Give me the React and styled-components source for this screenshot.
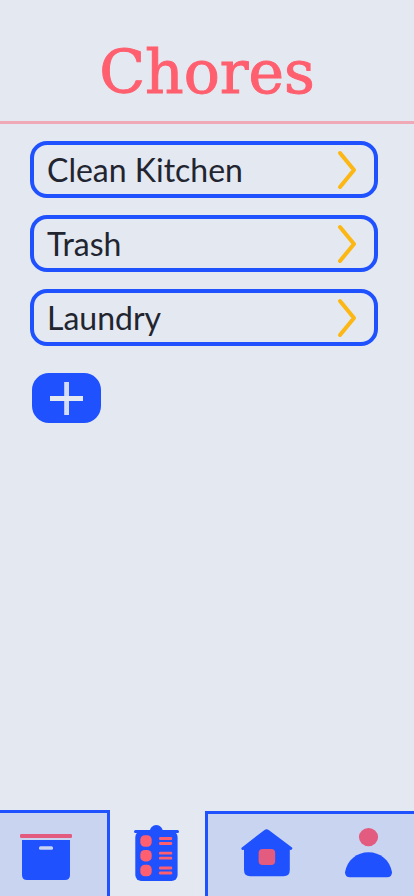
import React from "react";
import styled, { createGlobalStyle } from "styled-components";

const blue = "#1f51ff";
const coral = "#ff5f6e";
const rose = "#e35b7f";
const paper = "#e3e8f1";
const tint = "#c9d4f1";

const GlobalStyle = createGlobalStyle`
  *, *::before, *::after { box-sizing: border-box; }
  body { margin: 0; background: ${paper}; }
`;

const Page = styled.div`
  min-height: 100vh;
  display: flex;
  flex-direction: column;
  background: ${paper};
  color: #22252f;
  font-family: Lato, "Noto Sans", sans-serif;
`;

const Header = styled.header`
  display: flex;
  justify-content: center;
  padding: 32px 16px 9px;
  border-bottom: 3px solid #efa9b7;
`;

const Title = styled.h1`
  margin: 0;
  font: 400 60px/80px "DejaVu Serif", serif;
  color: ${coral};
  -webkit-text-stroke: 1px ${coral};
`;

const Main = styled.main`
  flex: 1;
  padding: 17px 36px 24px 30px;
`;

const ChoreList = styled.ul`
  list-style: none;
  margin: 0;
  padding: 0;
  display: flex;
  flex-direction: column;
  gap: 17px;
`;

const ChoreButton = styled.button`
  width: 100%;
  display: flex;
  align-items: center;
  justify-content: space-between;
  padding: 5px 17px 4px 13px;
  border: 4px solid ${blue};
  border-radius: 17px;
  background: transparent;
  color: inherit;
  font: 400 32px/40px Lato, "Noto Sans", sans-serif;
  text-align: left;
  cursor: pointer;
`;

const AddButton = styled.button`
  display: grid;
  place-items: center;
  width: 69px;
  height: 50px;
  margin: 27px 0 0 2px;
  padding: 0;
  border: 0;
  border-radius: 17px;
  background: ${blue};
  cursor: pointer;
`;

const TabBar = styled.nav`
  display: grid;
  grid-template-columns: 110fr 95fr 209fr;
  align-items: end;
`;

const TabGroup = styled.div`
  display: flex;
  align-items: flex-start;
  justify-content: ${(p) => p.$justify || "space-between"};
  height: ${(p) => (p.$side === "right" ? 85 : 86)}px;
  padding: ${(p) => p.$pad};
  background: ${(p) => (p.$side ? tint : "transparent")};
  border: 0 solid ${blue};
  border-top-width: ${(p) => (p.$side ? 3 : 0)}px;
  border-right-width: ${(p) => (p.$side === "left" ? 3 : 0)}px;
  border-left-width: ${(p) => (p.$side === "right" ? 3 : 0)}px;
`;

const Tab = styled.button`
  display: block;
  padding: 0;
  border: 0;
  background: transparent;
  cursor: pointer;
  svg { display: block; }
`;

const Chevron = () => (
  <svg width="20" height="40" viewBox="0 0 20 40" fill="none" aria-hidden="true">
    <path d="M3 3 L17 20 L3 37" stroke="#fcb712" strokeWidth="4" strokeLinecap="round" strokeLinejoin="round" />
  </svg>
);

const Plus = () => (
  <svg width="33" height="33" viewBox="0 0 33 33" aria-hidden="true">
    <rect x="14.2" y="0" width="4.8" height="33" fill="#d3dcf4" />
    <rect x="0" y="14" width="33" height="5" fill={paper} />
  </svg>
);

const BoxIcon = () => (
  <svg width="52" height="46" viewBox="0 0 52 46" aria-hidden="true">
    <rect width="52" height="4" rx="1.3" fill={rose} />
    <path d="M2 6H50V41Q50 46 45 46H7Q2 46 2 41Z" fill={blue} />
    <rect x="19" y="12.3" width="14" height="3.4" rx="1.5" fill={tint} />
  </svg>
);

const ClipboardIcon = () => (
  <svg width="45" height="56" viewBox="0 0 45 56" aria-hidden="true">
    <rect x="1.3" y="6" width="42.3" height="50" rx="6" fill={blue} />
    <rect x="0" y="5" width="45" height="3" rx="1.5" fill={blue} />
    <circle cx="22.3" cy="6.6" r="6.6" fill={blue} />
    {[10.3, 25, 39.8].map((y) => (
      <g key={y} fill={coral}>
        <rect x="6.3" y={y} width="11.4" height="11.4" rx="4.5" />
        <rect x="25" y={y + 1.8} width="13.2" height="2.8" rx="1.2" />
        <rect x="25" y={y + 6.8} width="13.2" height="2.8" rx="1.2" />
      </g>
    ))}
  </svg>
);

const HouseIcon = () => (
  <svg width="52" height="49" viewBox="0 -1 52 49" aria-hidden="true">
    <path
      d="M23.5 .9Q25.6 -.6 27.7 .9L51 18.6Q51.8 19.4 50.8 20.6Q49.8 21.2 48.8 20.8V41Q48.8 47.2 42.6 47.2H9.2Q3 47.2 3 41V20.8Q1.5 21.2 .7 20.4Q-.1 19.4 .9 18.6Z"
      fill={blue}
    />
    <rect x="17.6" y="20" width="16.6" height="16" rx="4" fill={rose} />
  </svg>
);

const PersonIcon = () => (
  <svg width="47" height="50" viewBox="0 0 47 50" aria-hidden="true">
    <ellipse cx="23.5" cy="9.1" rx="9.6" ry="9.1" fill={rose} />
    <path d="M5 49.2Q0 49.2 0 44.2C2 32 12 24.2 23.5 24.2S45 32 47 44.2Q47 49.2 42 49.2Z" fill={blue} />
  </svg>
);

const chores = ["Clean Kitchen", "Trash", "Laundry"];

export default function App() {
  return (
    <Page>
      <GlobalStyle />
      <Header>
        <Title>Chores</Title>
      </Header>
      <Main>
        <ChoreList>
          {chores.map((name) => (
            <li key={name}>
              <ChoreButton type="button">
                {name}
                <Chevron />
              </ChoreButton>
            </li>
          ))}
        </ChoreList>
        <AddButton type="button" aria-label="Add chore">
          <Plus />
        </AddButton>
      </Main>
      <TabBar aria-label="Main">
        <TabGroup $side="left" $justify="flex-start" $pad="21px 0 0 20px">
          <Tab type="button" aria-label="Storage"><BoxIcon /></Tab>
        </TabGroup>
        <TabGroup $justify="center" $pad="15px 2px 0 0">
          <Tab type="button" aria-label="Chores" aria-current="page"><ClipboardIcon /></Tab>
        </TabGroup>
        <TabGroup $side="right" $pad="14px 22px 0 33px">
          <Tab type="button" aria-label="Home"><HouseIcon /></Tab>
          <Tab type="button" aria-label="Profile"><PersonIcon /></Tab>
        </TabGroup>
      </TabBar>
    </Page>
  );
}
